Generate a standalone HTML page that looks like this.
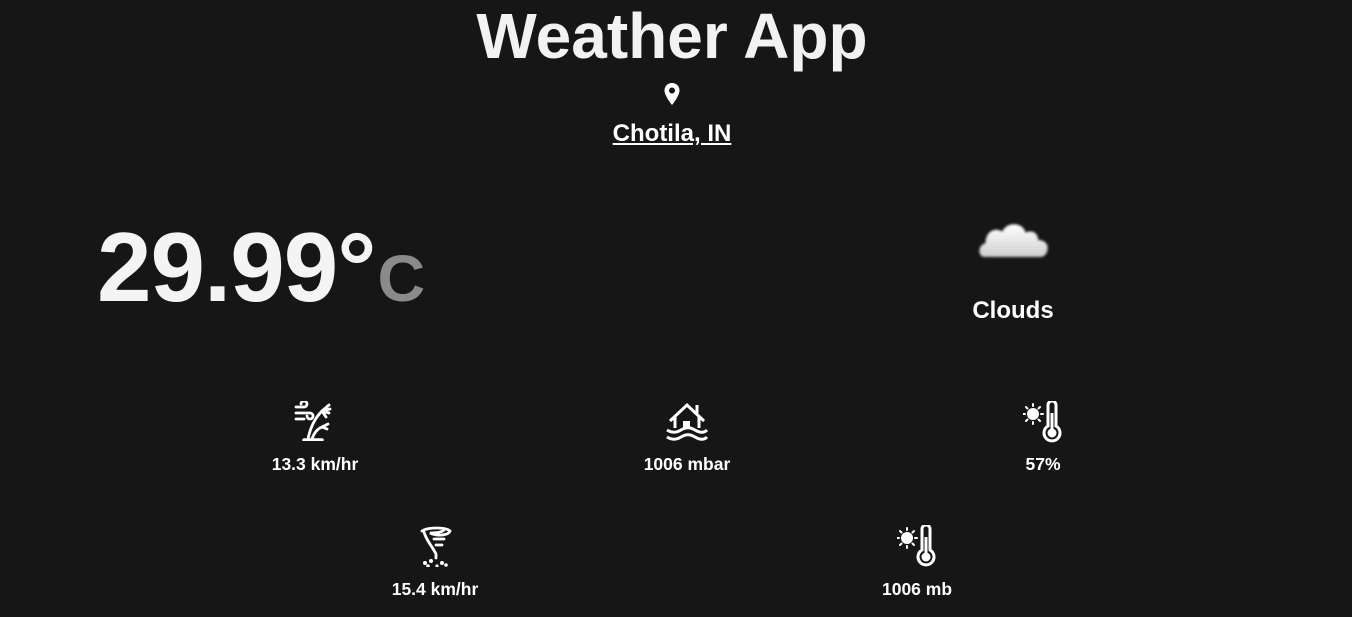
<!DOCTYPE html>
<html><head><meta charset="utf-8"><style>
body{margin:0;background:#161616;width:1352px;height:617px;overflow:hidden;font-family:"Liberation Sans",Arial,sans-serif;color:#fff;position:relative}
.a{position:absolute;white-space:nowrap}
.c{transform:translateX(-50%);text-align:center}
.lbl{font-size:17.5px;font-weight:bold}
svg{display:block}
</style></head><body>
<div class="a c" style="left:672px;top:-1px;font-size:64px;font-weight:bold;color:#f2f2f2">Weather App</div>
<div class="a c" style="left:672px;top:82px"><svg width="18" height="24" viewBox="0 0 18 24"><path d="M9 1C4.6 1 1.5 4.3 1.5 8.5 1.5 14 9 23 9 23s7.5-9 7.5-14.5C16.5 4.3 13.4 1 9 1z" fill="#fff"/><circle cx="9" cy="8.5" r="3" fill="#161616"/></svg></div>
<div class="a c" style="left:672px;top:120px;font-size:24px;font-weight:bold;text-decoration:underline">Chotila, IN</div>
<div class="a" style="left:97px;top:211px;font-size:98px;font-weight:bold;color:#f4f4f4;letter-spacing:-1px">29.99°<span style="font-size:66px;color:#8a8a8a;margin-left:2px">C</span></div>
<div class="a" style="left:976px;top:214px"><svg width="78" height="50" viewBox="0 0 74 46"><defs><filter id="b"><feGaussianBlur stdDeviation="1.2"/></filter><linearGradient id="g" x1="0" y1="0" x2="0" y2="1"><stop offset="0" stop-color="#fff"/><stop offset="1" stop-color="#cfcfcf"/></linearGradient></defs><path d="M8 40c-6 0-7-11 1-13 0-10 8-16 16-11 4-10 20-9 22 1 6-3 12 0 12 7 7 0 11 5 8 12-1 2-3 4-6 4z" fill="url(#g)" filter="url(#b)"/></svg></div>
<div class="a c" style="left:1013px;top:297px;font-size:24px;font-weight:bold">Clouds</div>

<div class="a c" style="left:315px;top:401px"><svg width="42" height="40" viewBox="0 0 42 40" fill="none" stroke="#fff" stroke-width="2.8" stroke-linecap="round"><path d="M2 6h8a3 3 0 1 0-3-3M2 12h14a3 3 0 1 1-3 3M2 18h8"/><path d="M14 38c2-10 6-20 14-28M18 38c2-6 5-10 10-12" /><path d="M28 10l7-6M28 10l8-2M28 10l7 2M28 10l4 6M28 26l6-3M28 26l5 2" /><path d="M10 39h18" stroke-width="3.5"/></svg></div>
<div class="a c lbl" style="left:315px;top:454px">13.3 km/hr</div>

<div class="a c" style="left:687px;top:401px"><svg width="42" height="40" viewBox="0 0 42 40" fill="none" stroke="#fff" stroke-width="3"><path d="M4 20L21 4l17 16M9 16v11M33 16v11M31 4v8"/><rect x="17" y="20" width="7" height="7" fill="#fff" stroke="none"/><path d="M1 29c5 3 9 3 14 0s9-3 14 0 9 3 12 0M1 36c5 3 9 3 14 0s9-3 14 0 9 3 12 0"/></svg></div>
<div class="a c lbl" style="left:687px;top:454px">1006 mbar</div>

<div class="a c" style="left:1043px;top:401px"><svg width="40" height="42" viewBox="0 0 40 42"><g stroke="#fff" stroke-width="2" stroke-linecap="round"><circle cx="10" cy="13" r="5" fill="#fff"/><path d="M10 3v2M10 21v2M0 13h2M18 13h2M3 6l1.5 1.5M15.5 18.5L17 20M3 20l1.5-1.5M15.5 7.5L17 6"/></g><path d="M25 4a4 4 0 0 1 8 0v21a8 8 0 1 1-8 0z" fill="none" stroke="#fff" stroke-width="3"/><circle cx="29" cy="32" r="4.5" fill="#fff"/><path d="M29 12v20" stroke="#fff" stroke-width="3"/></svg></div>
<div class="a c lbl" style="left:1043px;top:454px">57%</div>

<div class="a c" style="left:436px;top:525px"><svg width="36" height="42" viewBox="0 0 36 42" fill="none" stroke="#fff" stroke-width="2.8" stroke-linecap="round"><path d="M4 6c6-4 24-4 28 0-2 5-14 5-20 2 6 0 12-1 14-3M6 7c2 8 8 14 12 22v4"/><path d="M16 14h10M18 20h6"/><g fill="#fff" stroke="none"><circle cx="7" cy="38" r="2"/><circle cx="13" cy="36" r="2"/><circle cx="10" cy="41" r="1.8"/><circle cx="24" cy="38" r="2"/><circle cx="28" cy="40" r="1.8"/><circle cx="19" cy="41" r="1.6"/></g></svg></div>
<div class="a c lbl" style="left:435px;top:579px">15.4 km/hr</div>

<div class="a c" style="left:917px;top:525px"><svg width="40" height="42" viewBox="0 0 40 42"><g stroke="#fff" stroke-width="2" stroke-linecap="round"><circle cx="10" cy="13" r="5" fill="#fff"/><path d="M10 3v2M10 21v2M0 13h2M18 13h2M3 6l1.5 1.5M15.5 18.5L17 20M3 20l1.5-1.5M15.5 7.5L17 6"/></g><path d="M25 4a4 4 0 0 1 8 0v21a8 8 0 1 1-8 0z" fill="none" stroke="#fff" stroke-width="3"/><circle cx="29" cy="32" r="4.5" fill="#fff"/><path d="M29 12v20" stroke="#fff" stroke-width="3"/></svg></div>
<div class="a c lbl" style="left:917px;top:579px">1006 mb</div>
</body></html>
